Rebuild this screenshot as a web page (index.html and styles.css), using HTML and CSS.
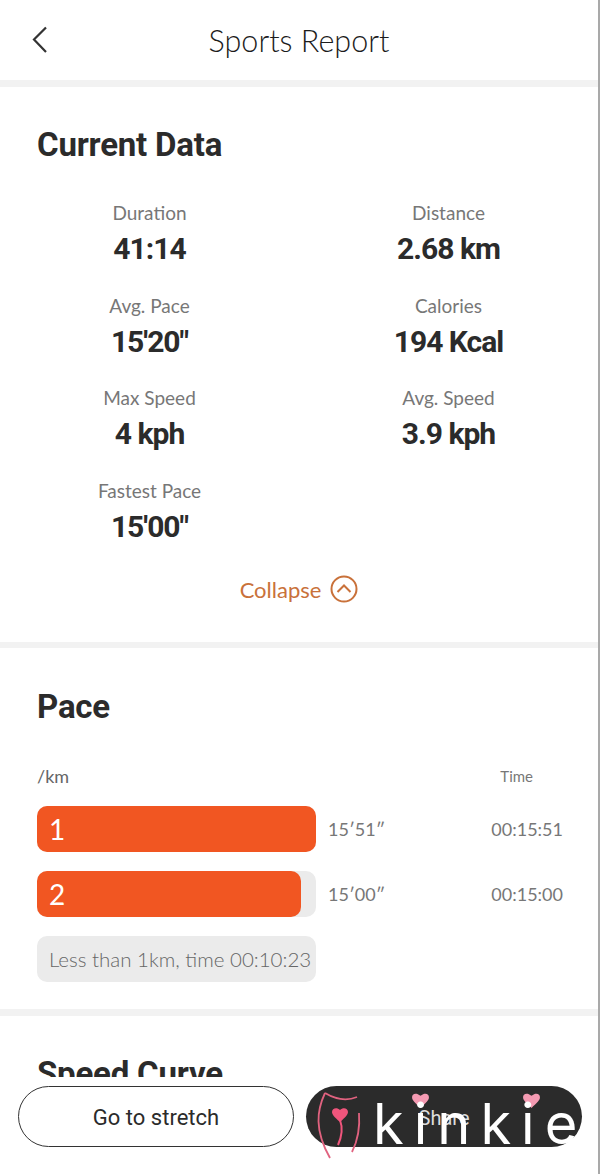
FILE: index.html
```html
<!DOCTYPE html>
<html lang="en">
<head>
    <meta charset="UTF-8">
    <meta name="viewport" content="width=device-width, initial-scale=1.0">
    <title>Sports Report</title>
    <link rel="stylesheet" href="styles.css">
</head>
<body>
    <div class="page">
        <header class="topbar">
            <svg class="back" width="18" height="28" viewBox="0 0 18 28"><path d="M15 1.5 L3 13.5 L15 26"/></svg>
            <div class="topbar-title">Sports Report</div>
        </header>

        <div class="content">
            <section class="card card-data">
                <h2>Current Data</h2>
                <div class="stats">
                    <div class="stat"><div class="stat-label">Duration</div><div class="stat-value">41:14</div></div>
                    <div class="stat"><div class="stat-label">Distance</div><div class="stat-value">2.68 km</div></div>
                    <div class="stat"><div class="stat-label">Avg. Pace</div><div class="stat-value">15'20"</div></div>
                    <div class="stat"><div class="stat-label">Calories</div><div class="stat-value">194 Kcal</div></div>
                    <div class="stat"><div class="stat-label">Max Speed</div><div class="stat-value">4 kph</div></div>
                    <div class="stat"><div class="stat-label">Avg. Speed</div><div class="stat-value">3.9 kph</div></div>
                    <div class="stat"><div class="stat-label">Fastest Pace</div><div class="stat-value">15'00"</div></div>
                </div>
                <div class="collapse">
                    <span>Collapse</span>
                    <svg width="28" height="28" viewBox="0 0 28 28"><circle cx="14" cy="14" r="12.5"/><path d="M7.5 17 L14 10.500 L20.5 17"/></svg>
                </div>
            </section>

            <section class="card card-pace">
                <h2>Pace</h2>
                <div class="pace-head">
                    <span>/km</span>
                    <span class="pace-head-time">Time</span>
                </div>
                <div class="pace-row">
                    <div class="track"><div class="fill" style="width: 100%">1</div></div>
                    <div class="pace-val">15′51″</div>
                    <div class="pace-time">00:15:51</div>
                </div>
                <div class="pace-row">
                    <div class="track"><div class="fill" style="width: 94.6%">2</div></div>
                    <div class="pace-val">15′00″</div>
                    <div class="pace-time">00:15:00</div>
                </div>
                <div class="pace-row">
                    <div class="track track-note">Less than 1km, time 00:10:23</div>
                </div>
            </section>

            <section class="card card-curve">
                <h2>Speed Curve</h2>
            </section>
        </div>

        <footer class="actions">
            <button class="btn btn-outline">Go to stretch</button>
            <button class="btn btn-dark">Share</button>

            <!-- watermark sits on top of the share button -->
            <div class="mark">
                <svg class="mark-bow" width="54" height="72" viewBox="0 0 54 72">
                    <path class="bow-line" d="M16 3 C8 20 5 40 21 68"/>
                    <path class="bow-line" d="M16 3 C26 9 38 11 48 7"/>
                    <path class="bow-line" d="M50 23 C51 36 49 50 43 62"/>
                    <path class="bow-heart" d="M31 32 C25 27 23 24 23 22 C23 18 28 17 31 20 C34 17 39 18 39 22 C39 24 37 27 31 32Z"/>
                    <path class="bow-tail" d="M31 30 C34 38 33 46 29 55"/>
                </svg>
                <svg class="mark-heart mark-heart-a" width="17" height="15" viewBox="0 0 18 16"><path d="M9 16 C3 10 0 8 0 4.500 C0 1 4 -1 9 3 C14 -1 18 1 18 4.500 C18 8 15 10 9 16Z"/></svg>
                <svg class="mark-heart mark-heart-b" width="17" height="15" viewBox="0 0 18 16"><path d="M9 16 C3 10 0 8 0 4.500 C0 1 4 -1 9 3 C14 -1 18 1 18 4.500 C18 8 15 10 9 16Z"/></svg>
                <span class="mark-text">kinkie</span>
            </div>
        </footer>
    </div>
</body>
</html>
```

FILE: styles.css
```css
* {
    box-sizing: border-box;
}

body {
    margin: 0;
    background: #fff;
    font-family: "Lato", "Noto Sans", sans-serif;
    color: #2b2b2b;
}

.page {
    height: 1174px;
    display: flex;
    flex-direction: column;
    overflow: hidden;
    border-right: 2px solid #a9a9a9;
    position: relative;
}

.topbar {
    height: 80px;
    flex: none;
    display: flex;
    align-items: center;
    justify-content: center;
    position: relative;
}

.back {
    position: absolute;
    left: 31px;
    top: 26px;
}

.back path {
    fill: none;
    stroke: #333;
    stroke-width: 2.2;
}

.topbar-title {
    font-size: 30.5px;
    color: #1c1c1c;
    font-weight: 300;
}

.content {
    flex: 1;
    min-height: 0;
    overflow: hidden;
}

.card {
    border-top: 7px solid #f2f2f2;
    padding: 0 37px;
}

h2 {
    margin: 0;
    font-family: "Roboto", sans-serif;
    font-weight: 700;
    font-size: 33px;
    line-height: 40px;
    letter-spacing: -0.2px;
    color: #2b2b2b;
}

.card-data {
    height: 562px;
    padding-top: 38px;
}

.stats {
    display: grid;
    grid-template-columns: 1fr 1fr;
    grid-auto-rows: 92.5px;
    margin: 36px -37px 0;
    text-align: center;
}

.stat-label {
    font-size: 19px;
    line-height: 24px;
    color: #777;
}

.stat-value {
    margin-top: 6px;
    font-family: "Roboto", sans-serif;
    font-weight: 700;
    font-size: 30px;
    line-height: 36px;
    letter-spacing: -1px;
    color: #2b2b2b;
}

.collapse {
    display: flex;
    align-items: center;
    justify-content: center;
    gap: 9px;
    margin-top: 4px;
    font-size: 22px;
    color: #c9713a;
}

.collapse svg {
    fill: none;
    stroke: #c9713a;
    stroke-width: 2;
}

.card-pace {
    height: 367px;
    border-top-width: 6px;
    padding-top: 39px;
}

.pace-head {
    display: flex;
    align-items: center;
    justify-content: space-between;
    margin-top: 37px;
    font-size: 18px;
    line-height: 24px;
    color: #666;
}

.pace-head-time {
    margin-right: 28px;
    font-size: 15px;
    color: #777;
}

.pace-row {
    display: grid;
    grid-template-columns: 279px 1fr auto;
    align-items: center;
    gap: 12px;
    margin-top: 19px;
    color: #777;
    font-size: 18px;
}

.pace-head + .pace-row {
    margin-top: 18px;
}

.pace-time {
    margin-right: -2px;
}

.track {
    height: 46px;
    background: #ebebeb;
    border-radius: 10px;
}

.fill {
    height: 100%;
    background: #f15622;
    border-radius: 10px;
    color: #fff;
    font-size: 28px;
    line-height: 46px;
    padding-left: 12px;
}

.track-note {
    font-size: 20.5px;
    line-height: 46px;
    padding-left: 12px;
    color: #666;
    font-weight: 300;
    white-space: nowrap;
}

.card-curve {
    padding-top: 38px;
}

.actions {
    flex: none;
    height: 97px;
    padding: 9px 16px 0 18px;
    display: flex;
    align-items: flex-start;
    justify-content: space-between;
    background: #fff;
    position: relative;
}

.btn {
    width: 276px;
    height: 61px;
    padding-top: 3px;
    border-radius: 31px;
    font-family: "Roboto", sans-serif;
    font-size: 22px;
}

.btn-outline {
    background: #fff;
    border: 1px solid #333;
    color: #2b2b2b;
}

.btn-dark {
    background: #2b2b2b;
    border: 0;
    color: #ddd;
    font-size: 20px;
}

/* watermark */
.mark {
    position: absolute;
    left: 0;
    top: 0;
    right: 0;
    bottom: 0;
    pointer-events: none;
}

.mark-bow {
    position: absolute;
    left: 309px;
    top: 13px;
}

.bow-line {
    fill: none;
    stroke: #e0627f;
    stroke-width: 1.8;
}

.bow-heart {
    fill: #f0557c;
}

.bow-tail {
    fill: none;
    stroke: #f0557c;
    stroke-width: 2;
}

.mark-heart {
    position: absolute;
    top: 16px;
}

.mark-heart path {
    fill: #f49ab2;
}

.mark-heart-a {
    left: 412px;
}

.mark-heart-b {
    left: 523px;
}

.mark-text {
    position: absolute;
    left: 373px;
    top: 15px;
    font-family: "Inter", sans-serif;
    font-size: 56px;
    line-height: 64px;
    letter-spacing: 10px;
    color: #fff;
}
```
